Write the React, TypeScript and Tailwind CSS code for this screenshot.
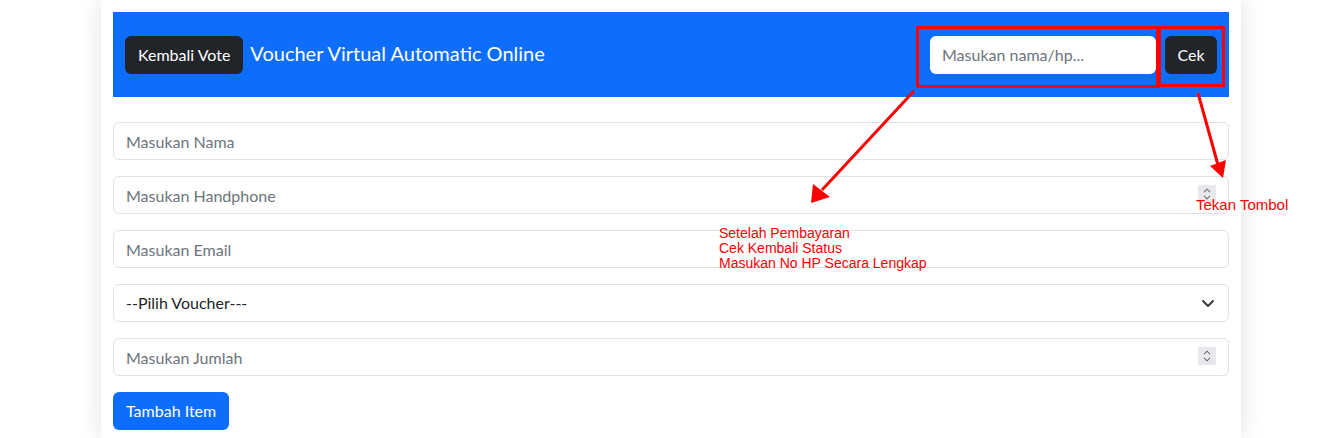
import { ChevronDown, ChevronUp } from "lucide-react";

const font = { fontFamily: '"Segoe UI", Lato, sans-serif' };
const arial = { fontFamily: '"Liberation Sans", Arial, sans-serif' };

function Spinner() {
  return (
    <div className="absolute right-[13px] top-[9px] w-[18px] h-[18px] bg-[#e9e9ed] flex flex-col items-center justify-center text-[#6f6f75]">
      <ChevronUp size={12} strokeWidth={2.4} className="-mb-[4px]" />
      <ChevronDown size={12} strokeWidth={2.4} />
    </div>
  );
}

function Field({ placeholder, spin }: { placeholder: string; spin?: boolean }) {
  return (
    <div className="relative">
      <input
        placeholder={placeholder}
        className="w-full h-[38px] px-3 border border-[#dee2e6] rounded-[6px] text-[16px] text-[#212529] placeholder:text-[#6c757d] outline-none bg-white"
      />
      {spin && <Spinner />}
    </div>
  );
}

export default function App() {
  return (
    <div className="relative w-[1326px] h-[438px] bg-white overflow-hidden" style={font}>
      <div className="ml-[101px] w-[1140px] min-h-[438px] bg-white shadow-[0_0_22px_rgba(0,0,0,0.12)] px-3 pt-3">
        {/* header */}
        <div className="bg-[#0d6efd] h-[85px] px-3 flex items-center justify-between">
          <div className="flex items-center gap-[7px]">
            <button className="h-[38px] px-[13px] bg-[#212529] text-white text-[16px] rounded-[6px]">Kembali Vote</button>
            <span className="text-white text-[20px] -mt-[3px]">Voucher Virtual Automatic Online</span>
          </div>
          <div className="flex items-center gap-[9px]">
            <input
              placeholder="Masukan nama/hp..."
              className="w-[226px] h-[38px] px-3 rounded-[6px] bg-white text-[16px] placeholder:text-[#6c757d] outline-none"
            />
            <button className="h-[38px] w-[52px] bg-[#212529] text-white text-[16px] rounded-[6px]">Cek</button>
          </div>
        </div>

        {/* form */}
        <div className="mt-[25px] flex flex-col gap-4">
          <Field placeholder="Masukan Nama" />
          <Field placeholder="Masukan Handphone" spin />
          <Field placeholder="Masukan Email" />
          <div className="relative h-[38px] px-3 border border-[#dee2e6] rounded-[6px] flex items-center justify-between text-[16px] text-[#212529]">
            <span>--Pilih Voucher---</span>
            <svg width="14" height="10" viewBox="0 0 14 10" className="mr-[1px]">
              <path d="M2 3l5 5 5-5" fill="none" stroke="#343a40" strokeWidth="2" strokeLinecap="round" strokeLinejoin="round" />
            </svg>
          </div>
          <Field placeholder="Masukan Jumlah" spin />
          <div>
            <button className="h-[38px] px-[13px] bg-[#0d6efd] text-white text-[16px] rounded-[6px]">Tambah Item</button>
          </div>
        </div>
      </div>

      {/* annotations */}
      <svg className="absolute inset-0 pointer-events-none" width="1326" height="438">
        <rect x="917.5" y="27.5" width="240" height="59" fill="none" stroke="#ff0000" strokeWidth="3" />
        <rect x="1159.5" y="27.5" width="64" height="58" fill="none" stroke="#ff0000" strokeWidth="3" />
        <line x1="914" y1="91" x2="822" y2="190" stroke="#ff0000" strokeWidth="3" />
        <polygon points="811,203 813,184 830,197" fill="#ff0000" />
        <line x1="1198" y1="93" x2="1218" y2="165" stroke="#ff0000" strokeWidth="3" />
        <polygon points="1223,178 1210,166 1226,160" fill="#ff0000" />
      </svg>
      <div className="absolute left-[719px] top-[226px] text-[14px] leading-[15px] text-[#ff0000]" style={arial}>
        <div>Setelah Pembayaran</div>
        <div>Cek Kembali Status</div>
        <div>Masukan No HP Secara Lengkap</div>
      </div>
      <div className="absolute left-[1196px] top-[197px] text-[15px] leading-[15px] text-[#ff0000]" style={arial}>
        Tekan Tombol
      </div>
    </div>
  );
}
